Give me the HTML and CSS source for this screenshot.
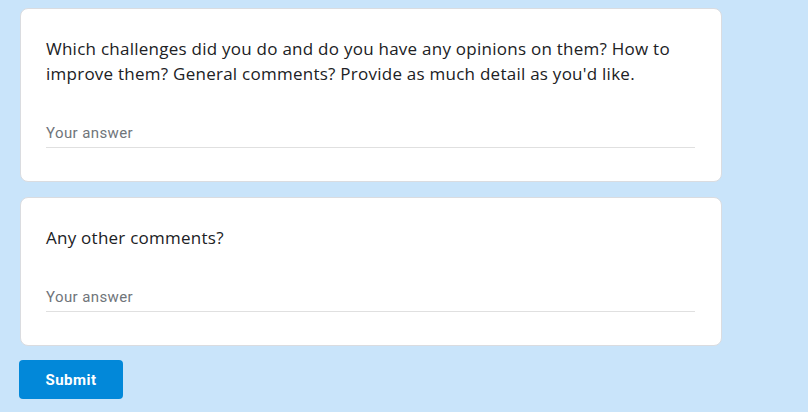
FILE: index.html
```html
<!DOCTYPE html>
<html>
<head>
<meta charset="utf-8">
<link rel="stylesheet" href="styles.css">
</head>
<body>
<main class="form">
  <section class="card">
    <div class="question">Which challenges did you do and do you have any opinions on them? How to improve them? General comments? Provide as much detail as you'd like.</div>
    <div class="answer">Your answer</div>
  </section>
  <section class="card">
    <div class="question">Any other comments?</div>
    <div class="answer">Your answer</div>
  </section>
  <div class="actions">
    <button class="submit" type="button">Submit</button>
  </div>
</main>
</body>
</html>
```
FILE: styles.css
```css
html, body {
  margin: 0;
  padding: 0;
  background: #c9e4fa;
}
.form {
  width: 702px;
  padding: 8px 0 0 20px;
  display: flex;
  flex-direction: column;
  gap: 15px;
}
.card {
  background: #ffffff;
  border: 1px solid #dadce0;
  border-radius: 8px;
  padding: 27px 26px 33px 25px;
}
.question {
  font-family: "Open Sans", sans-serif;
  font-size: 17px;
  line-height: 25px;
  color: #202124;
  letter-spacing: 0.25px;
}
.answer {
  margin-top: 29px;
  height: 28px;
  padding-top: 4px;
  line-height: 28px;
  border-bottom: 1px solid #e0e0e0;
  font-family: Roboto, sans-serif;
  font-size: 15px;
  letter-spacing: 0.4px;
  color: #70757a;
}
.actions {
  margin-top: -1px;
  margin-left: -1px;
}
.submit {
  background: #0288d9;
  color: #ffffff;
  border: none;
  border-radius: 4px;
  width: 104px;
  height: 39px;
  font-family: Roboto, sans-serif;
  font-weight: 700;
  font-size: 15px;
  letter-spacing: 0.5px;
  cursor: pointer;
}
```
